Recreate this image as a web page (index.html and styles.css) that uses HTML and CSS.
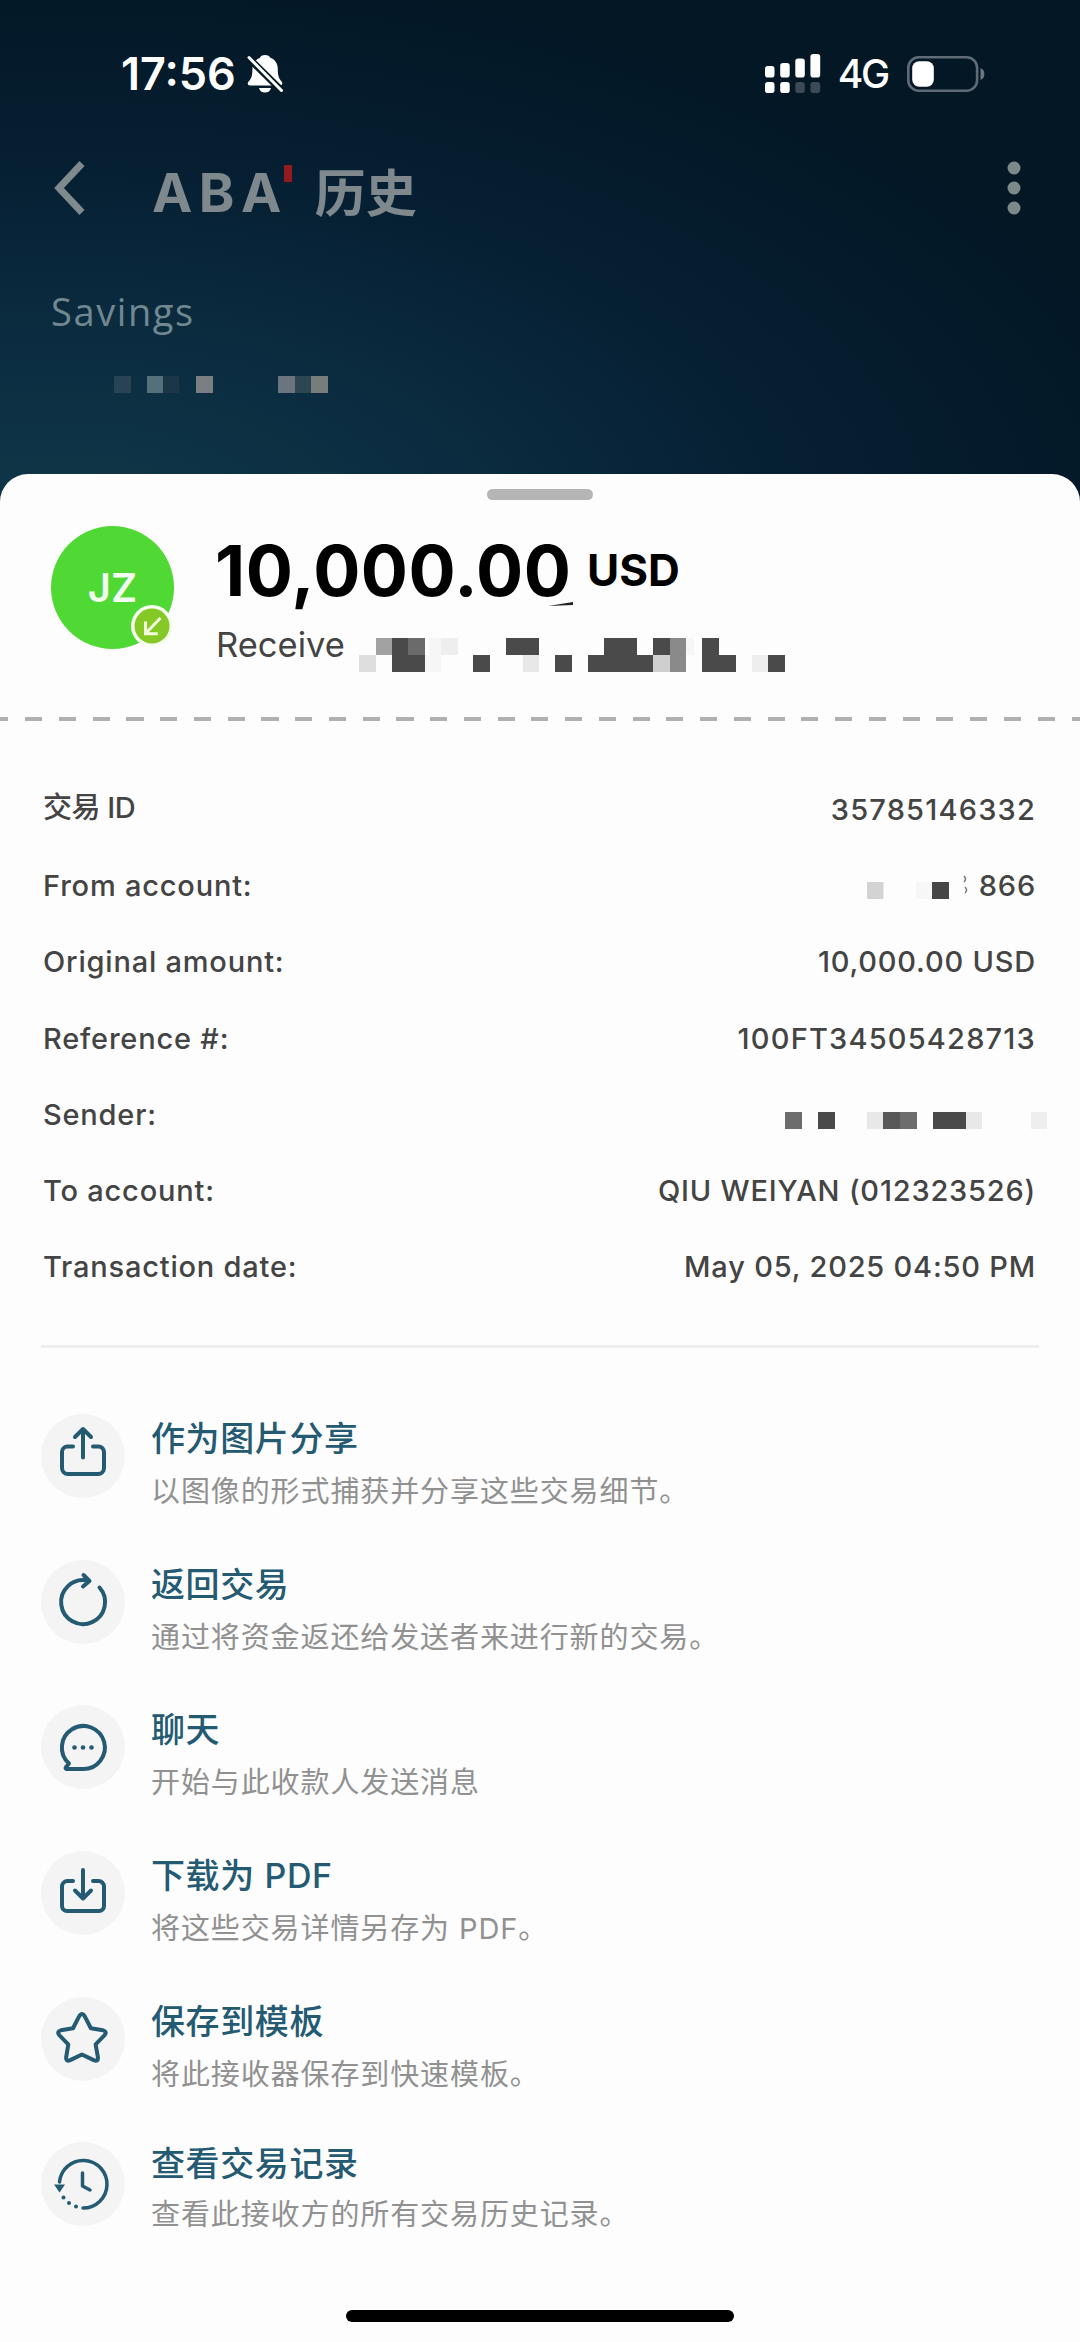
FILE: index.html
```html
<!DOCTYPE html>
<html lang="zh-CN">
<head>
<meta charset="utf-8">
<title>ABA 历史</title>
<link rel="stylesheet" href="styles.css">
</head>
<body>
<div class="screen">
  <header class="backdrop">
    <div class="status">
      <span class="time">17:56</span>
      <svg class="bell" width="36" height="40" viewBox="0 0 36 40">
        <path fill="#fff" d="M18 1c2.800 0 4.600 1.200 5.400 2.800 5 1.900 7.400 6.200 7.400 11.200 0 7 1.300 9.500 3.600 12.300 1.700 2 .8 4.300-1.800 4.300H3.400C.8 31.800-.1 29.500 1.600 27.500c2.500-2.800 3.800-5.300 3.800-12.300 0-5 2.400-9.500 7.400-11.200C13.600 2.200 15.200 1 18 1zM12 34h12c-.7 3-2.900 4.600-6 4.600S12.700 37 12 34z"/>
        <path d="M0 2.500l36 35.500" stroke="#041a26" stroke-width="7"/>
        <path d="M2 3.500l32.500 33" stroke="#fff" stroke-width="3" stroke-linecap="round"/>
      </svg>
      <svg class="signal" width="56" height="40" viewBox="0 0 56 40" fill="#fff">
        <rect x="0" y="12" width="9.500" height="11.500" rx="2.800"/><rect x="15.200" y="9" width="9.500" height="14.500" rx="2.800"/>
        <rect x="30.300" y="4.500" width="9.500" height="19" rx="2.800"/><rect x="45.400" y="0" width="9.800" height="23.500" rx="2.800"/>
        <rect x="0" y="28" width="9.500" height="11" rx="2.800"/><rect x="15.200" y="28" width="9.500" height="11" rx="2.800"/>
        <g opacity=".22"><rect x="30.300" y="28" width="9.500" height="11" rx="2.800"/><rect x="45.400" y="28" width="9.800" height="11" rx="2.800"/></g>
      </svg>
      <span class="net">4G</span>
      <svg class="battery" width="79" height="36" viewBox="0 0 79 36">
        <rect x="1.300" y="1.300" width="68.800" height="33.400" rx="10.500" fill="none" stroke="#5f6c78" stroke-width="2.600"/>
        <rect x="5.200" y="5.200" width="21.600" height="25.600" rx="7" fill="#fff"/>
        <path d="M73.500 12c5.200 1.500 5.200 10.500 0 12z" fill="#6b7680"/>
      </svg>
    </div>
    <div class="navbar">
      <svg class="back" width="32" height="56" viewBox="0 0 32 56"><path d="M28 3.500L5 28l23 24.500" fill="none" stroke="#7e8a8c" stroke-width="7"/></svg>
      <span class="brand">ABA</span><i class="tick"></i><span class="title">历史</span>
      <svg class="more" width="14" height="56" viewBox="0 0 14 56" fill="#7d888b"><circle cx="7" cy="8" r="6.500"/><circle cx="7" cy="28" r="6.500"/><circle cx="7" cy="48" r="6.500"/></svg>
    </div>
    <div class="account">Savings</div>
    <svg class="masked" width="214" height="17" viewBox="0 0 214 17" shape-rendering="crispEdges">
      <path fill="#284354" d="M0 0h17v17H0z"/><path fill="#54707a" d="M33 0h16v17H33z"/><path fill="#1c3547" d="M49 0h16v17H49z"/><path fill="#7b7f83" d="M82 0h17v17H82z"/><path fill="#6b7580" d="M164 0h17v17h-17z"/><path fill="#2c4751" d="M181 0h16v17h-16z"/><path fill="#777c7c" d="M197 0h17v17h-17z"/>
    </svg>
  </header>

  <main class="sheet">
    <div class="handle"></div>
    <section class="summary">
      <div class="avatar">JZ
        <svg class="badge" width="42" height="42" viewBox="0 0 42 42"><circle cx="21" cy="21" r="21" fill="#f6fff0"/><circle cx="21" cy="21" r="17.500" fill="#84c926"/><path d="M29.500 13L15 28M14.500 16.500v12.300h12.300" fill="none" stroke="#f4ffe0" stroke-width="3"/></svg>
      </div>
      <div class="figures">
        <div class="amount"><span class="value">10,000.00</span><span class="currency">USD</span></div>
        <div class="party"><span class="received">Receive</span>
          <svg class="pixels" width="426" height="34" viewBox="0 0 426 34" shape-rendering="crispEdges">
            <path fill="#4a4a4a" d="M33 0h16v17h17v17H33zM147 0h33v17h-33zM245 0h33v17h-33zM294 0h17v17h-17zM343 0h17v17h17v17h-34zM114 17h17v17h-17zM196 17h17v17h-17zM229 17h65v17h-65zM409 17h17v17h-17z"/>
            <path fill="#6b6b6b" d="M49 0h17v17H49z"/><path fill="#a2a2a2" d="M17 0h16v17H17z"/><path fill="#8a8a8a" d="M311 0h16v34h-16z"/><path fill="#cfcfcf" d="M294 17h17v17h-17z"/><path fill="#dedede" d="M0 17h17v17H0z"/><path fill="#e8e8e8" d="M164 17h16v17h-16z"/><path fill="#eee" d="M393 17h16v17h-16zM82 0h17v17H82z"/><path fill="#f6f6f6" d="M70 0h12v17H70zM66 17h16v17H66zM327 0h8v17h-8z"/>
          </svg>
        </div>
        <svg class="stroke" width="26" height="5" viewBox="0 0 26 5"><path d="M0 4L25 0v3z" fill="#222"/></svg>
      </div>
    </section>
    <div class="perforation"></div>

    <dl class="details">
      <div class="row"><dt class="tight">交易 ID</dt><dd class="digits">35785146332</dd></div>
      <div class="row"><dt>From account:</dt><dd class="masked-value">
        <svg class="from-pixels" width="102" height="24" viewBox="0 0 102 24"><path fill="#d3d3d3" d="M0 7h16.500v17H0z"/><path fill="#f7f7f7" d="M49 7h16v17H49z"/><path fill="#464646" d="M65 7h17v17H65z"/><path d="M97 1c2 2 2 4 0 6M98 12c2 2 2 4 0 6" fill="none" stroke="#777" stroke-width="1.500"/></svg>866</dd></div>
      <div class="row"><dt>Original amount:</dt><dd>10,000.00 USD</dd></div>
      <div class="row"><dt>Reference #:</dt><dd class="digits">100FT34505428713</dd></div>
      <div class="row"><dt>Sender:</dt><dd class="masked-value">
        <svg class="sender-pixels" width="262" height="17" viewBox="0 0 262 17" shape-rendering="crispEdges"><path fill="#6d6d6d" d="M0 0h17v17H0zM115 0h17v17h-17z"/><path fill="#4a4a4a" d="M33 0h17v17H33zM148 0h33v17h-33z"/><path fill="#585858" d="M98 0h17v17H98z"/><path fill="#e8e8e8" d="M82 0h16v17H82zM181 0h16v17h-16z"/><path fill="#eee" d="M246 0h16v17h-16z"/></svg></dd></div>
      <div class="row"><dt>To account:</dt><dd>QIU WEIYAN (012323526)</dd></div>
      <div class="row"><dt>Transaction date:</dt><dd>May 05, 2025 04:50 PM</dd></div>
    </dl>
    <hr class="divider">

    <ul class="actions">
      <li class="action"><span class="icon"><svg viewBox="0 0 84 84"><path d="M32 32.500h-5.500a5.500 5.500 0 0 0-5.500 5.500v16a6 6 0 0 0 6 6h30a6 6 0 0 0 6-6V38a5.500 5.500 0 0 0-5.500-5.500H52M42 43.500V16M34 23l8-8 8 8"/></svg></span>
        <div><div class="name">作为图片分享</div><div class="hint">以图像的形式捕获并分享这些交易细节。</div></div></li>
      <li class="action"><span class="icon"><svg viewBox="0 0 84 84"><path d="M58.500 27.500A22 22 0 1 1 46 20.500M42.500 15l6 6-6.500 5.500"/></svg></span>
        <div><div class="name">返回交易</div><div class="hint">通过将资金返还给发送者来进行新的交易。</div></div></li>
      <li class="action"><span class="icon"><svg viewBox="0 0 84 84"><path d="M42 64H25.500q-1.500-.5-.5-2l3-3.500A21.500 21.500 0 1 1 42 64z"/><g class="dots"><circle cx="33.500" cy="42.500" r="2.300"/><circle cx="42" cy="42.500" r="2.300"/><circle cx="50.500" cy="42.500" r="2.300"/></g></svg></span>
        <div><div class="name">聊天</div><div class="hint">开始与此收款人发送消息</div></div></li>
      <li class="action"><span class="icon"><svg viewBox="0 0 84 84"><path d="M32 30h-5.500a5.500 5.500 0 0 0-5.500 5.500V55a5 5 0 0 0 5 5h32a5 5 0 0 0 5-5V35.500a5.500 5.500 0 0 0-5.500-5.500H52M42 19v28M34 39.500l8 8 8-8"/></svg></span>
        <div><div class="name">下载为 PDF</div><div class="hint">将这些交易详情另存为 PDF。</div></div></li>
      <li class="action"><span class="icon"><svg viewBox="0 0 84 84"><path transform="translate(3 1.500) scale(.93)" stroke-width="4.300" d="M37.600 19.500q3.200-5.500 6.400 0l6.400 12.500 13 2.200q5 1.500 1.500 5.500l-9.400 9.600 2.500 14q.3 5-4.500 3L40.800 60.200 28.200 66.300q-4.800 2-4.400-3l2.300-14-9.400-9.600q-3.500-4 1.500-5.500l13-2.200z"/></svg></span>
        <div><div class="name">保存到模板</div><div class="hint">将此接收器保存到快速模板。</div></div></li>
      <li class="action last"><span class="icon"><svg viewBox="0 0 84 84"><path d="M42 66a23.800 23.800 0 1 0-23.500-26M41.500 31v13l7.500 4" stroke-width="3.500"/><path class="head" d="M13 42.500h11l-5.500 8z"/><g class="dots"><circle cx="22.500" cy="55.500" r="2"/><circle cx="28" cy="61" r="2"/><circle cx="35" cy="64.500" r="2"/></g></svg></span>
        <div><div class="name">查看交易记录</div><div class="hint">查看此接收方的所有交易历史记录。</div></div></li>
    </ul>
    <div class="home"></div>
  </main>
</div>
</body>
</html>
```
FILE: styles.css
```css
* { box-sizing: border-box; }
body { margin: 0; font-family: Inter, "Noto Sans CJK SC", sans-serif; }
svg { display: block; flex: none; }
.screen {
  width: 1080px; height: 2342px; overflow: hidden;
  display: flex; flex-direction: column;
  background: radial-gradient(ellipse 1150px 580px at 60px 540px, #10394a 0%, #0b2b3f 38%, #061f32 65%, #031725 100%);
}
.backdrop { height: 474px; flex: none; }
.status { height: 110px; padding: 37px 94px 0 121px; display: flex; align-items: center; color: #fff; }
.time { font-size: 45px; font-weight: 600; width: 126px; letter-spacing: 0; }
.bell { margin-right: auto; }
.net { font-size: 39px; font-weight: 500; margin: 0 19px 0 17px; letter-spacing: -2.200px; }
.navbar { height: 156px; padding: 0 59px 0 54px; display: flex; align-items: center; }
.brand { margin-left: 66px; font-size: 54px; font-weight: 700; letter-spacing: 6.500px; color: #7f898d; padding-top: 8px; }
.tick { width: 8px; height: 17px; background: #941a1d; margin: 0 23px 30px -4px; }
.title { font-size: 51px; font-weight: 700; color: #7f898d; padding-top: 11px; line-height: 60px; }
.more { margin-left: auto; }
.account { margin-left: 51px; padding-top: 18px; height: 110px; font: 400 38px/54px "Open Sans", sans-serif; letter-spacing: 1.600px; color: #718891; }
.masked { margin-left: 114px; }
.sheet { flex: 1; background: #fdfdfd; border-radius: 28px 28px 0 0; display: flex; flex-direction: column; }
.handle { width: 106px; height: 11px; border-radius: 6px; background: #b5b5b6; margin: 15px auto 0; flex: none; }
.summary { height: 217px; padding: 26px 0 0 51px; display: flex; gap: 41px; flex: none; }
.avatar { position: relative; width: 123px; height: 123px; border-radius: 50%; background: #50d835; color: #f3fff0; font-size: 40px; font-weight: 600; line-height: 123px; text-align: center; }
.badge { position: absolute; left: 80px; top: 79px; }
.figures { position: relative; }
.amount { display: flex; align-items: center; height: 88px; gap: 19px; color: #000; }
.value { font-size: 70px; font-weight: 700; width: 353px; letter-spacing: 0.500px; }
.currency { font-size: 44px; font-weight: 700; }
.party { display: flex; align-items: flex-start; height: 51px; margin-left: 1px; color: #444; }
.received { width: 143px; padding-top: 6px; font-size: 34.500px; line-height: 50px; }
.pixels { margin-top: 24px; }
.stroke { position: absolute; left: 333px; top: 76px; }
.perforation { height: 4px; flex: none; background: repeating-linear-gradient(90deg, #b0b0b0 0 17px, transparent 17px 33.750px) -8.500px 0 / 1100px 4px; }
.details { margin: 0; padding: 50px 44px 0 43px; height: 624px; flex: none; color: #444; font-size: 29px; font-weight: 450; letter-spacing: 0.800px; }
.row { display: flex; justify-content: space-between; align-items: center; height: 76.300px; }
.row dd { margin: 0; }
.row .digits { letter-spacing: 1.200px; }
.tight { letter-spacing: -0.500px; line-height: 40px; margin-top: -3px; }
.masked-value { display: flex; align-items: center; gap: 10px; }
.from-pixels { margin-top: 4px; }
.sender-pixels { margin: 13px -11px 0 0; }
.divider { width: 998px; height: 3px; border: 0; margin: 0 auto; background: #eee; flex: none; }
.actions { list-style: none; margin: 0; padding: 66px 41px 0; }
.action { display: flex; height: 145.700px; gap: 26px; }
.icon { width: 84px; height: 84px; border-radius: 50%; background: #f4f4f5; }
.icon svg { fill: none; stroke: #245a72; stroke-width: 4; stroke-linecap: round; stroke-linejoin: round; }
.icon .dots, .icon .head { fill: #245a72; stroke: none; }
.name { font-size: 34px; font-weight: 500; line-height: 50px; letter-spacing: 0.600px; color: #245a72; }
.hint { font-size: 29px; line-height: 44px; margin-top: 6px; letter-spacing: 0.900px; color: #919191; }
.last .name { margin-top: -3px; }
.last .hint { margin-top: 4px; }
.home { width: 388px; height: 12px; border-radius: 6px; background: #000; margin: auto auto 20px; flex: none; }
```
